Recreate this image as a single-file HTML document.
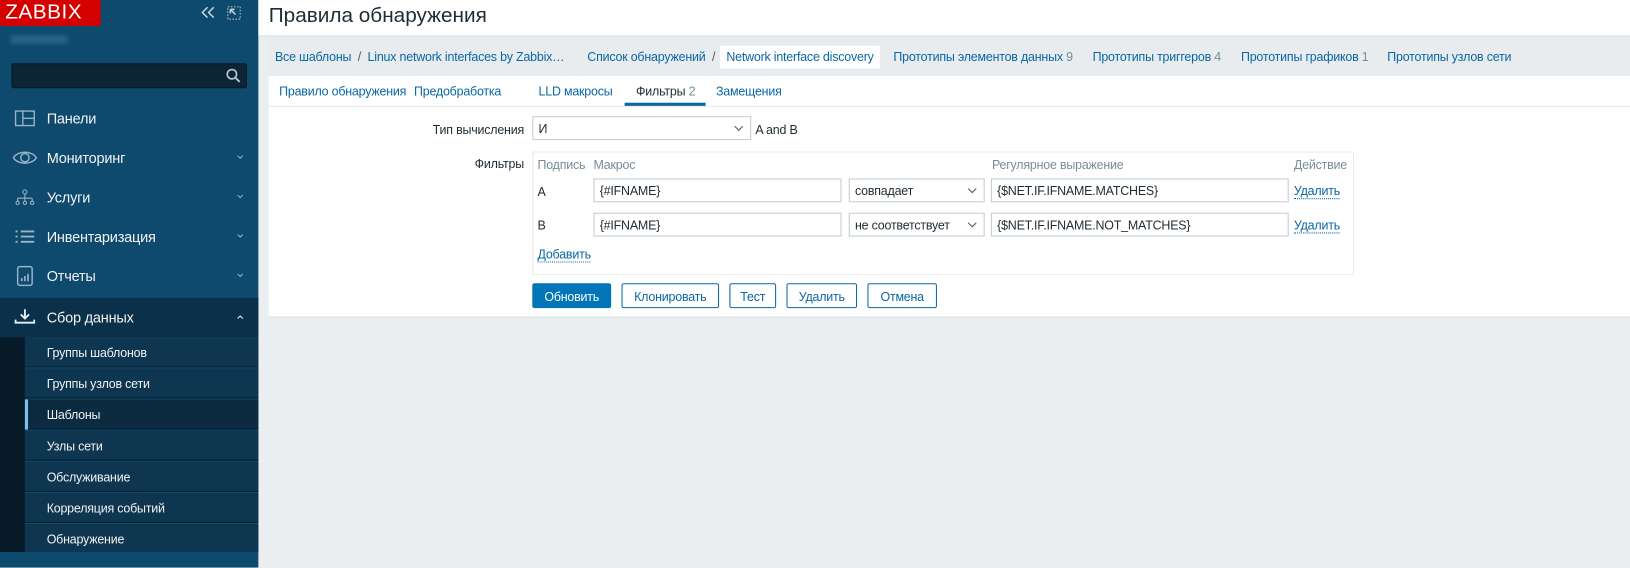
<!DOCTYPE html>
<html><head><meta charset="utf-8"><style>
*{box-sizing:border-box;margin:0;padding:0}
html,body{width:1630px;height:567px;overflow:hidden;background:#ebeef0}
#w{position:absolute;left:0;top:0;width:1571px;height:547px;transform:scale(1.0376);transform-origin:0 0;font-family:"Liberation Sans",Arial,sans-serif;font-size:12px;color:#1f2c33;letter-spacing:-0.2px}
.a{position:absolute;white-space:nowrap}
#sb{position:absolute;left:0;top:0;width:249px;height:547px;background:#0e4a6e}
.mi{position:absolute;left:0;width:249px;height:38px;color:#f2f2f2;font-size:14px}
.mi span.t{position:absolute;left:45px;top:11px}
.mi svg.ch{position:absolute;left:228px;top:16px}
.sub{position:absolute;left:24px;width:225px;height:29px;background:#0f3650;border-bottom:1px solid #071f2e;color:#f2f2f2;font-size:12px}
.sub span{position:absolute;left:21px;top:8px}
a,.lnk{color:#0a67a3;text-decoration:none}
.inp{position:absolute;height:23px;border:1px solid #c5cbd1;background:#fff;padding:4px 5px;font-size:12px}
.sel::after{content:"";position:absolute;right:8px;top:6px;width:5px;height:5px;border-right:1px solid #555;border-bottom:1px solid #555;transform:rotate(45deg)}
.btn{position:absolute;top:273px;height:24px;border:1px solid #0a67a3;background:#fff;color:#0a67a3;text-align:center;padding-top:5px;border-radius:2px}
.gr{color:#768d99}
.del{border-bottom:1px dotted #0a67a3}
</style></head><body><div id="w">
<div id="sb">
 <div class="a" style="left:0;top:0;width:97px;height:25px;background:#d40000;color:#fff;font-size:20px;letter-spacing:0.5px;padding:0 0 0 5px;line-height:25px">ZABBIX</div>
 <svg class="a" style="left:194px;top:6px" width="14" height="12"><path d="M6 1L1 6l5 5M12 1L7 6l5 5" fill="none" stroke="#cfd9e0" stroke-width="1.4"/></svg>
 <svg class="a" style="left:219px;top:6px" width="13" height="13"><rect x="0.5" y="0.5" width="12" height="12" fill="none" stroke="#cfd9e0" stroke-dasharray="1.5 1.5"/><path d="M3 3l5 5M3 3h4M3 3v4" stroke="#cfd9e0" stroke-width="1.4" fill="none"/></svg>
 <div class="a" style="left:10px;top:34px;width:55px;height:8px;background:#2a6389;filter:blur(2px)"></div>
 <div class="a" style="left:11px;top:61px;width:227px;height:24px;background:#0b2536;border:1px solid #061826;border-radius:2px"></div>
 <svg class="a" style="left:217px;top:65px" width="16" height="16"><circle cx="6.5" cy="6.5" r="4.5" fill="none" stroke="#b5c4cf" stroke-width="1.6"/><path d="M10 10l4 4" stroke="#b5c4cf" stroke-width="1.8"/></svg>
 <div class="mi" style="top:95px"><svg class="a" style="left:14px;top:11px" width="20" height="16"><path d="M1 1h18v14H1zM8 1v14M8 8h11" fill="none" stroke="#9ab3c5" stroke-width="1.3"/></svg><span class="t">Панели</span></div>
 <div class="mi" style="top:133px"><svg class="a" style="left:12px;top:11px" width="24" height="16"><path d="M1 8C5 1 19 1 23 8C19 15 5 15 1 8z" fill="none" stroke="#9ab3c5" stroke-width="1.4"/><circle cx="12" cy="8" r="4" fill="none" stroke="#9ab3c5" stroke-width="1.4"/></svg><span class="t">Мониторинг</span><svg class="ch" width="7" height="5"><path d="M1 1l2.5 2.5L6 1" fill="none" stroke="#8fb0c6"/></svg></div>
 <div class="mi" style="top:171px"><svg class="a" style="left:14px;top:11px" width="20" height="16"><circle cx="10" cy="3" r="2" fill="none" stroke="#9ab3c5"/><path d="M10 5v4M3 9h14M3 9v3M10 9v3M17 9v3" stroke="#9ab3c5" fill="none"/><circle cx="3" cy="13.5" r="1.6" fill="none" stroke="#9ab3c5"/><circle cx="10" cy="13.5" r="1.6" fill="none" stroke="#9ab3c5"/><circle cx="17" cy="13.5" r="1.6" fill="none" stroke="#9ab3c5"/></svg><span class="t">Услуги</span><svg class="ch" width="7" height="5"><path d="M1 1l2.5 2.5L6 1" fill="none" stroke="#8fb0c6"/></svg></div>
 <div class="mi" style="top:209px"><svg class="a" style="left:14px;top:12px" width="20" height="14"><path d="M1 2h2M6 2h13M1 7h2M6 7h13M1 12h2M6 12h13" stroke="#9ab3c5" stroke-width="1.8"/></svg><span class="t">Инвентаризация</span><svg class="ch" width="7" height="5"><path d="M1 1l2.5 2.5L6 1" fill="none" stroke="#8fb0c6"/></svg></div>
 <div class="mi" style="top:247px"><svg class="a" style="left:16px;top:9px" width="16" height="20"><rect x="1" y="1" width="14" height="18" rx="2" fill="none" stroke="#9ab3c5" stroke-width="1.4"/><path d="M5 15v-3M8 15v-5M11 15v-7" stroke="#9ab3c5" stroke-width="1.6"/></svg><span class="t">Отчеты</span><svg class="ch" width="7" height="5"><path d="M1 1l2.5 2.5L6 1" fill="none" stroke="#8fb0c6"/></svg></div>
 <div class="mi" style="top:287px;background:#0b3049"><svg class="a" style="left:14px;top:10px" width="20" height="16"><path d="M10 1v9M6 6l4 4 4-4M1 11v3h18v-3" fill="none" stroke="#e8eef2" stroke-width="1.8"/></svg><span class="t">Сбор данных</span><svg class="ch" width="7" height="5"><path d="M1 4l2.5-2.5L6 4" fill="none" stroke="#e8eef2"/></svg></div>
 <div class="a" style="left:0;top:325px;width:24px;height:207px;background:#071a27"></div>
 <div class="sub" style="top:325px"><span>Группы шаблонов</span></div>
 <div class="sub" style="top:355px"><span>Группы узлов сети</span></div>
 <div class="sub" style="top:385px;background:#0c2b41"><span>Шаблоны</span></div>
 <div class="a" style="left:24px;top:385px;width:3px;height:29px;background:#7cc1ee"></div>
 <div class="sub" style="top:415px"><span>Узлы сети</span></div>
 <div class="sub" style="top:445px"><span>Обслуживание</span></div>
 <div class="sub" style="top:475px"><span>Корреляция событий</span></div>
 <div class="sub" style="top:505px;border:none;height:27px"><span>Обнаружение</span></div>
</div>
<div class="a" style="left:249px;top:0;width:1322px;height:34px;background:#fff"></div>
<div class="a" style="left:259px;top:4px;font-size:20px;color:#1f2c33;letter-spacing:0">Правила обнаружения</div>
<div class="a" style="left:249px;top:34px;width:1322px;height:1px;background:#dde3e7"></div>
<div class="a" style="left:259px;top:35px;width:1312px;height:38px;background:#e8ecef;border-bottom:1px solid #dde3e7"></div>
<div class="a" style="left:694px;top:44px;width:154px;height:22px;background:#fff"></div>
<div class="a" style="left:265px;top:48px;font-size:12px"><a>Все шаблоны</a>&nbsp;&nbsp;<span style="color:#555">/</span>&nbsp;&nbsp;<a>Linux network interfaces by Zabbix…</a></div>
<div class="a" style="left:566px;top:48px"><a>Список обнаружений</a>&nbsp;&nbsp;<span style="color:#555">/</span></div>
<div class="a" style="left:700px;top:48px"><a>Network interface discovery</a></div>
<div class="a" style="left:861px;top:48px"><a>Прототипы элементов данных</a> <span class="gr">9</span></div>
<div class="a" style="left:1053px;top:48px"><a>Прототипы триггеров</a> <span class="gr">4</span></div>
<div class="a" style="left:1196px;top:48px"><a>Прототипы графиков</a> <span class="gr">1</span></div>
<div class="a" style="left:1337px;top:48px"><a>Прототипы узлов сети</a></div>
<div class="a" style="left:259px;top:73px;width:1312px;height:233px;background:#fff;border-bottom:1px solid #dde3e7"></div>
<div class="a" style="left:259px;top:102px;width:1312px;height:1px;background:#e6e9eb"></div>
<div class="a" style="left:269px;top:81px"><a>Правило обнаружения</a></div>
<div class="a" style="left:399px;top:81px"><a>Предобработка</a></div>
<div class="a" style="left:519px;top:81px"><a>LLD макросы</a></div>
<div class="a" style="left:613px;top:81px">Фильтры <span class="gr">2</span></div>
<div class="a" style="left:690px;top:81px"><a>Замещения</a></div>
<div class="a" style="left:602px;top:99px;width:78px;height:3px;background:#0a67a3"></div>
<div class="a" style="left:350px;top:118px;width:155px;text-align:right">Тип вычисления</div>
<div class="inp sel" style="left:513px;top:112px;width:211px">И</div>
<div class="a" style="left:728px;top:118px">A and B</div>
<div class="a" style="left:350px;top:151px;width:155px;text-align:right">Фильтры</div>
<div class="a" style="left:513px;top:146px;width:792px;height:119px;border:1px solid #ebebeb"></div>
<div class="a gr" style="left:518px;top:152px">Подпись</div>
<div class="a gr" style="left:572px;top:152px">Макрос</div>
<div class="a gr" style="left:956px;top:152px">Регулярное выражение</div>
<div class="a gr" style="left:1247px;top:152px">Действие</div>
<div class="a" style="left:518px;top:178px">A</div>
<div class="inp" style="left:572px;top:172px;width:239px">{#IFNAME}</div>
<div class="inp sel" style="left:818px;top:172px;width:131px">совпадает</div>
<div class="inp" style="left:955px;top:172px;width:287px">{$NET.IF.IFNAME.MATCHES}</div>
<div class="a" style="left:1247px;top:177px"><a class="del">Удалить</a></div>
<div class="a" style="left:518px;top:210px">B</div>
<div class="inp" style="left:572px;top:205px;width:239px">{#IFNAME}</div>
<div class="inp sel" style="left:818px;top:205px;width:131px">не соответствует</div>
<div class="inp" style="left:955px;top:205px;width:287px">{$NET.IF.IFNAME.NOT_MATCHES}</div>
<div class="a" style="left:1247px;top:210px"><a class="del">Удалить</a></div>
<div class="a" style="left:518px;top:238px"><a class="del">Добавить</a></div>
<div class="btn" style="left:513px;width:76px;background:#0275b8;border-color:#0275b8;color:#fff">Обновить</div>
<div class="btn" style="left:599px;width:94px">Клонировать</div>
<div class="btn" style="left:703px;width:45px">Тест</div>
<div class="btn" style="left:758px;width:68px">Удалить</div>
<div class="btn" style="left:836px;width:67px">Отмена</div>
</div></body></html>
